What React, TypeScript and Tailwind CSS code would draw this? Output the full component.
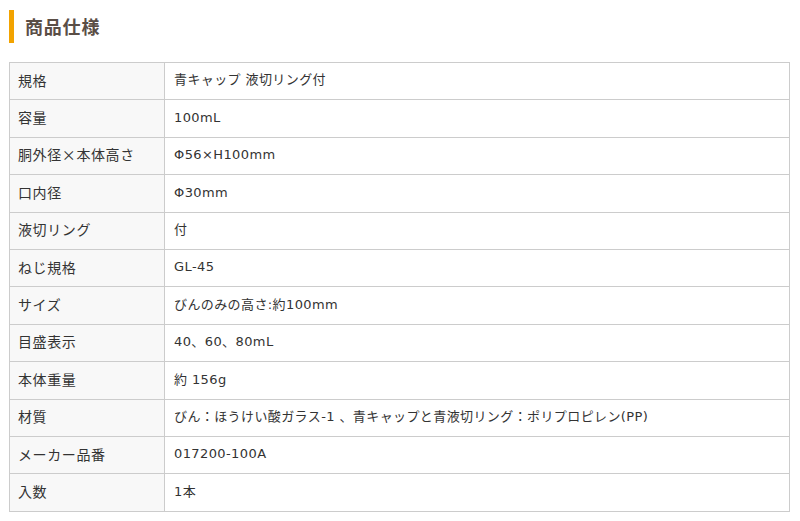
import React from 'react';

const specs = [
  { label: '規格', value: '青キャップ 液切リング付' },
  { label: '容量', value: '100mL' },
  { label: '胴外径×本体高さ', value: 'Φ56×H100mm' },
  { label: '口内径', value: 'Φ30mm' },
  { label: '液切リング', value: '付' },
  { label: 'ねじ規格', value: 'GL-45' },
  { label: 'サイズ', value: 'びんのみの高さ:約100mm' },
  { label: '目盛表示', value: '40、60、80mL' },
  { label: '本体重量', value: '約 156g' },
  { label: '材質', value: 'びん：ほうけい酸ガラス-1 、青キャップと青液切リング：ポリプロピレン(PP)' },
  { label: 'メーカー品番', value: '017200-100A' },
  { label: '入数', value: '1本' },
];

const App: React.FC = () => {
  return (
    <div className="bg-white px-[9px] pt-[10px]" style={{ fontFamily: '"Noto Sans CJK JP", "Noto Sans", sans-serif' }}>
      <h2 className="border-l-[5px] border-[#f2a300] pl-[11px] h-[33px] flex items-center text-[18px] font-bold text-[#5a4e46] tracking-[0.8px]">
        商品仕様
      </h2>
      <table className="mt-[19px] w-[781px] border-collapse">
        <tbody>
          {specs.map(row => (
            <tr key={row.label}>
              <th className="w-[155px] h-[37.4px] border border-[#cccccc] bg-[#f8f8f8] px-[8px] pb-[2px] text-left text-[14px] font-normal tracking-[0.6px] text-[#333]">
                {row.label}
              </th>
              <td className="border border-[#cccccc] px-[9px] pb-[2px] font-['DejaVu_Sans','Noto_Sans_CJK_JP',sans-serif] text-[13px] tracking-[0.4px] text-[#333]">
                {row.value}
              </td>
            </tr>
          ))}
        </tbody>
      </table>
    </div>
  );
};

export default App;
